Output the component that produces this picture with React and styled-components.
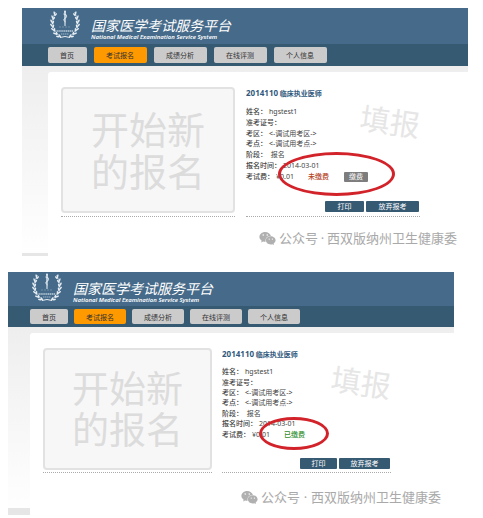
import React from "react";
import styled, { createGlobalStyle, ThemeProvider } from "styled-components";
import { FaWeixin } from "react-icons/fa";

const GlobalStyle = createGlobalStyle`
  *, *::before, *::after { box-sizing: border-box; }
  body {
    margin: 0;
    background: #fff;
    color: #444;
    font-family: "Noto Sans", "Noto Sans CJK SC", sans-serif;
    font-size: 7px;
  }
  h1, h2, p, dl, dd, dt { margin: 0; }
  button { font: inherit; border: 0; padding: 0; cursor: pointer; }
`;

const unpaid = {
  inset: "0 15px 0 22px",
  header: 36,
  brandLeft: 28,
  nav: 22,
  tab: 16,
  tabGap: 7,
  tabPadding: "0 13px 0 12px",
  left: 26,
  foot: 3,
  body: 190,
  padRight: 48,
  colGap: 11,
  card: 126,
  cardGap: 3,
  big: 38,
  bigLine: 42,
  rows: 75,
  rowsTop: 7,
  printWidth: 39,
  dropWidth: 53,
  markTop: 12,
  markRight: 11,
  dot: 9,
  ring: { left: 32, top: 65, width: 117, height: 44 },
};

const paid = {
  inset: "0 29px 0 8px",
  header: 34,
  brandLeft: 24,
  nav: 21,
  tab: 15,
  tabGap: 6,
  tabPadding: "0 12px",
  left: 22,
  foot: 7,
  body: 188,
  padRight: 63,
  colGap: 10,
  card: 122,
  cardGap: 2,
  big: 37,
  bigLine: 41,
  rows: 73,
  rowsTop: 6,
  printWidth: 37,
  dropWidth: 51,
  markTop: 15,
  markRight: 13,
  dot: 11,
  ring: { left: 37, top: 69, width: 70, height: 33 },
};

const Page = styled.main`
  display: flex;
  flex-direction: column;
  gap: 16px;
  padding: 8px 0 3px;
`;

const Shot = styled.section`
  margin: ${({ theme }) => theme.inset};
`;

const Header = styled.header`
  display: flex;
  align-items: center;
  gap: 11px;
  height: ${({ theme }) => theme.header}px;
  padding-left: ${({ theme }) => theme.brandLeft}px;
  background: #466b8a;
  color: #fff;

  svg { margin-bottom: 2px; }
`;

const Brand = styled.div`
  padding-top: 6px;
  font-style: italic;
  white-space: nowrap;
`;

const BrandName = styled.h1`
  font-size: 14px;
  font-weight: 400;
  line-height: 16px;
`;

const BrandSub = styled.p`
  font-size: 6px;
  font-weight: 600;
  line-height: 7px;
`;

const Nav = styled.nav`
  display: flex;
  align-items: center;
  gap: ${({ theme }) => theme.tabGap}px;
  height: ${({ theme }) => theme.nav}px;
  padding-left: ${({ theme }) => theme.left}px;
  background: #375a73;
`;

const Tab = styled.button`
  height: ${({ theme }) => theme.tab}px;
  padding: ${({ theme }) => theme.tabPadding};
  border-radius: 2px;
  background: ${({ $active }) => ($active ? "#ff9900" : "#cbcbcb")};
  color: #333;
  white-space: nowrap;
`;

const Body = styled.div`
  display: flex;
  min-height: ${({ theme }) => theme.body}px;
  padding: 6px 0 0 ${({ theme }) => theme.left}px;
  background:
    linear-gradient(#e6e6e6, #e6e6e6) bottom / 100% ${({ theme }) => theme.foot}px no-repeat,
    linear-gradient(#eee, #fff);
`;

const Panel = styled.div`
  flex: 1;
  min-width: 0;
  padding-top: 15px;
  border-radius: 3px 0 0 0;
  background: #fff;
`;

const Columns = styled.div`
  display: grid;
  grid-template-columns: 1fr 1fr;
  gap: ${({ theme }) => theme.colGap}px;
  padding: 0 ${({ theme }) => theme.padRight}px 0 13px;
`;

const Column = styled.div`
  position: relative;
  display: flex;
  flex-direction: column;
  padding-bottom: ${({ theme }) => theme.cardGap}px;
  border-bottom: 1px dotted #aaa;
`;

const StartCard = styled.button`
  height: ${({ theme }) => theme.card}px;
  border: 2px solid #e2e2e2;
  border-radius: 4px;
  background: #f7f7f7;
  color: #dcdcdc;
  font-size: ${({ theme }) => theme.big}px;
  line-height: ${({ theme }) => theme.bigLine}px;
  white-space: nowrap;
`;

const ExamTitle = styled.h2`
  color: #31597c;
  font-size: 7px;
  line-height: 12px;
  white-space: nowrap;
`;

const ExamCode = styled.span`
  font-size: 8px;
`;

const Details = styled.dl`
  display: grid;
  grid-template-rows: repeat(7, 1fr);
  height: ${({ theme }) => theme.rows}px;
  margin-top: ${({ theme }) => theme.rowsTop}px;
`;

const Detail = styled.div`
  display: flex;
  align-items: center;
  gap: 2px;
  line-height: 10px;
  white-space: nowrap;

  dt { font-weight: 500; }
  dd { display: flex; align-items: center; }
`;

const Status = styled.span`
  margin-left: 14px;
  color: ${({ $paid }) => ($paid ? "#2f8f2f" : "#b5431c")};
  font-weight: 500;
`;

const PayButton = styled.button`
  width: 24px;
  height: 10px;
  margin-left: 15px;
  border-radius: 1px;
  background: #7d7d7d;
  color: #fff;
  line-height: 10px;
`;

const Actions = styled.div`
  display: flex;
  justify-content: flex-end;
  gap: 2px;
  margin-top: auto;
  padding: 0 1px 1px 0;
`;

const Action = styled.button`
  width: ${({ $wide, theme }) => ($wide ? theme.dropWidth : theme.printWidth)}px;
  height: 11px;
  border-radius: 1px;
  background: #375a73;
  color: #fff;
  line-height: 11px;
`;

const Stamp = styled.span`
  position: absolute;
  top: 15px;
  right: 0;
  color: #e6e6e6;
  font-size: 30px;
  line-height: 40px;
  transform: rotate(8deg);
`;

const Ring = styled.span`
  position: absolute;
  left: ${({ theme }) => theme.ring.left}px;
  top: ${({ theme }) => theme.ring.top}px;
  width: ${({ theme }) => theme.ring.width}px;
  height: ${({ theme }) => theme.ring.height}px;
  border: 3px solid #d2232a;
  border-radius: 50%;
  pointer-events: none;
`;

const Watermark = styled.p`
  display: flex;
  align-items: center;
  justify-content: flex-end;
  margin-top: ${({ theme }) => theme.markTop}px;
  padding-right: ${({ theme }) => theme.markRight}px;
  color: #a9a9a9;
  font-size: 13px;
  line-height: 18px;
  white-space: nowrap;

  svg { margin-right: 3px; color: #b0b0b0; }
`;

const Dot = styled.span`
  width: ${({ theme }) => theme.dot}px;
  text-align: center;
`;

const LEAVES = [
  [5, 3, 12], [3, 7, 6], [2, 11, 0], [2, 15, -10],
  [3, 19, -25], [5, 23, -40], [8, 26, -60],
];

function Branch() {
  return (
    <g>
      <path d="M5.5 2C1.5 9 1 20 11 27" fill="none" stroke="#e6edf3" strokeWidth="0.6" />
      {LEAVES.map(([x, y, r]) => (
        <g key={y} transform={`translate(${x} ${y}) rotate(${r})`}>
          <ellipse cx="-0.6" cy="0" rx="0.8" ry="2" transform="rotate(-28)" />
          <ellipse cx="1.6" cy="0.8" rx="0.8" ry="1.9" transform="rotate(32)" />
        </g>
      ))}
    </g>
  );
}

function Emblem() {
  return (
    <svg width="30" height="30" viewBox="0 0 30 30" fill="#e6edf3" aria-hidden="true">
      <Branch />
      <g transform="translate(30 0) scale(-1 1)"><Branch /></g>
      <path d="M10 27.5l5-1 5 1" stroke="#e6edf3" strokeWidth="1" fill="none" />
      <circle cx="15" cy="1.5" r="1" />
      <path d="M14.2 2h1.6l-.3 14h-1z" />
      <path d="M13.4 4q3.6 0 3.2 2.2T14 9q-1 1.6 1.6 3" fill="none" stroke="#e6edf3" strokeWidth="0.9" />
      <path d="M9.5 17h11" stroke="#a9bfd0" strokeWidth="0.8" strokeDasharray="1 2" />
      <path d="M6.5 21h17" stroke="#bccddb" strokeWidth="1.6" strokeDasharray="1.4 .5" />
      <path d="M11 24h8" stroke="#9fb6c9" strokeWidth="1" strokeDasharray="1.4 .5" />
    </svg>
  );
}

const TABS = ["首页", "考试报名", "成绩分析", "在线评测", "个人信息"];

const FIELDS = [
  ["姓名：", "hgstest1"],
  ["准考证号：", ""],
  ["考区：", "<-调试用考区->"],
  ["考点：", "<-调试用考点->"],
  ["阶段：", "\u00a0报名"],
  ["报名时间：", "2014-03-01"],
];

function ExamScreen({ theme, isPaid }) {
  return (
    <ThemeProvider theme={theme}>
      <Shot>
        <Header>
          <Emblem />
          <Brand>
            <BrandName>国家医学考试服务平台</BrandName>
            <BrandSub>National Medical Examination Service System</BrandSub>
          </Brand>
        </Header>
        <Nav>
          {TABS.map((label) => (
            <Tab key={label} type="button" $active={label === "考试报名"}>{label}</Tab>
          ))}
        </Nav>
        <Body>
          <Panel>
            <Columns>
              <Column>
                <StartCard type="button">开始新<br />的报名</StartCard>
              </Column>
              <Column>
                <Stamp>填报</Stamp>
                <ExamTitle><ExamCode>2014110</ExamCode> 临床执业医师</ExamTitle>
                <Details>
                  {FIELDS.map(([label, value]) => (
                    <Detail key={label}>
                      <dt>{label}</dt>
                      <dd>{value}</dd>
                    </Detail>
                  ))}
                  <Detail>
                    <dt>考试费：</dt>
                    <dd>
                      ¥0.01
                      <Status $paid={isPaid}>{isPaid ? "已缴费" : "未缴费"}</Status>
                      {!isPaid && <PayButton type="button">缴费</PayButton>}
                    </dd>
                  </Detail>
                </Details>
                <Actions>
                  <Action type="button">打印</Action>
                  <Action type="button" $wide>放弃报考</Action>
                </Actions>
                <Ring />
              </Column>
            </Columns>
            <Watermark>
              <FaWeixin size={17} />
              <span>公众号</span>
              <Dot>·</Dot>
              <span>西双版纳州卫生健康委</span>
            </Watermark>
          </Panel>
        </Body>
      </Shot>
    </ThemeProvider>
  );
}

export default function App() {
  return (
    <>
      <GlobalStyle />
      <Page>
        <ExamScreen theme={unpaid} isPaid={false} />
        <ExamScreen theme={paid} isPaid />
      </Page>
    </>
  );
}
